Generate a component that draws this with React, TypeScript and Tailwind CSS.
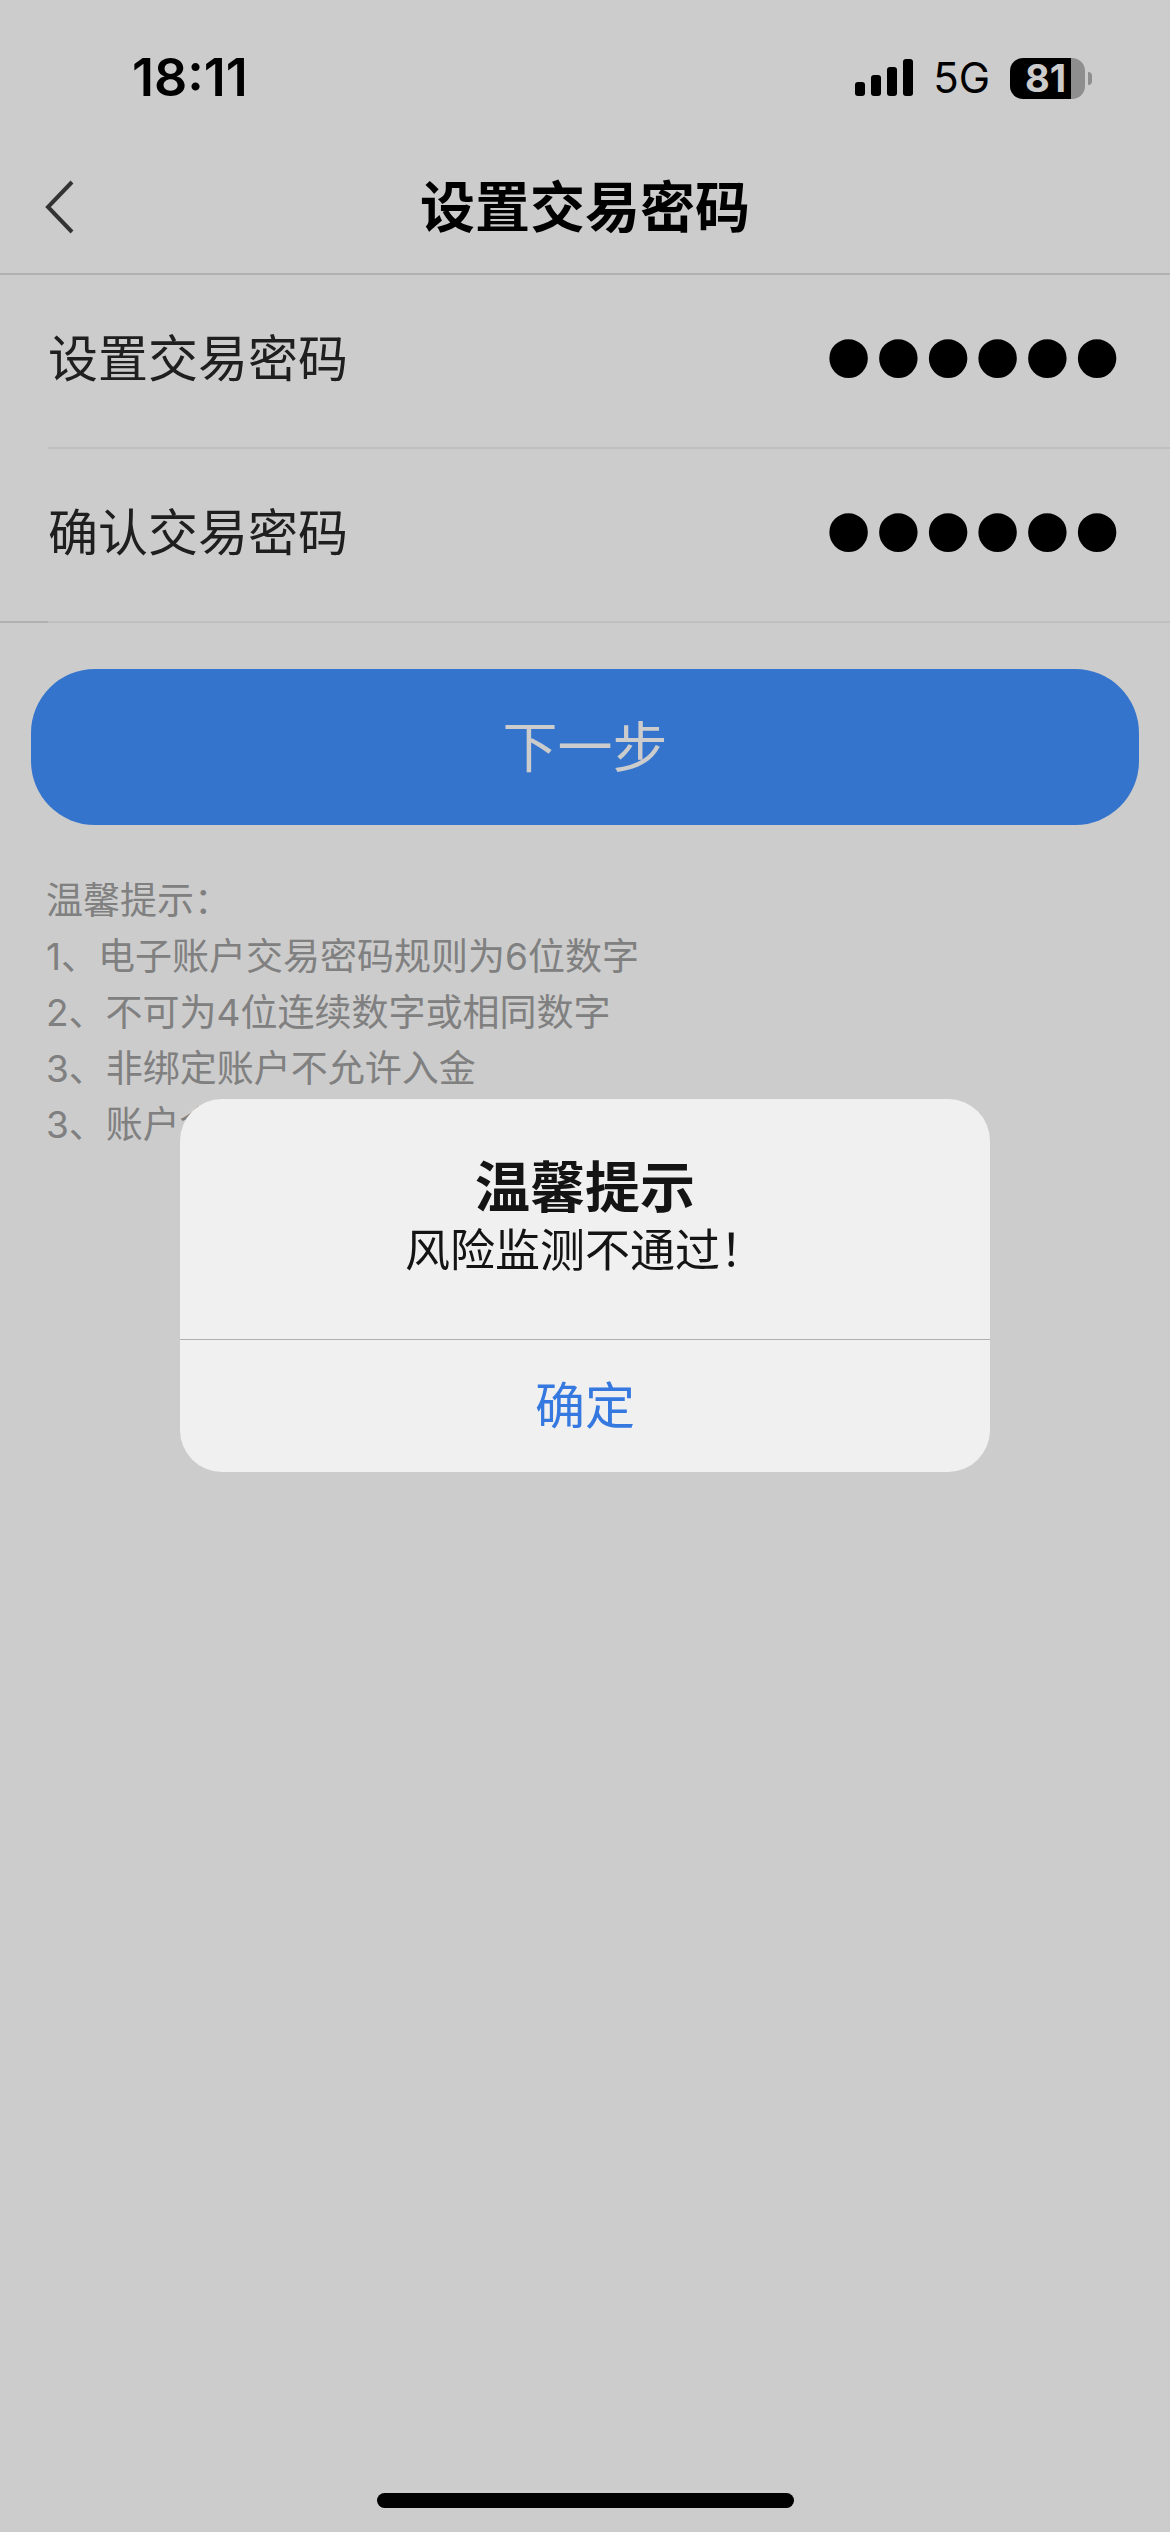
import { useState } from 'react'

interface PasswordRowProps {
  id: string
  label: string
  value: string
  onChange: (value: string) => void
}

const tips = [
  '温馨提示：',
  '1、电子账户交易密码规则为6位数字',
  '2、不可为4位连续数字或相同数字',
  '3、非绑定账户不允许入金',
  '3、账户余额',
]

function StatusBar() {
  return (
    <div className="flex h-[156px] items-center justify-between pr-[78px] pl-[132px]">
      <span className="text-[52px] leading-[60px] font-semibold">18:11</span>
      <div className="flex items-center">
        {/* 信号 */}
        <svg width="58" height="38" viewBox="0 0 58 38" aria-hidden="true">
          <rect x="0" y="23" width="10" height="14" rx="3" />
          <rect x="16" y="16" width="10" height="21" rx="3" />
          <rect x="32" y="8" width="10" height="29" rx="3" />
          <rect x="48" y="0" width="10" height="37" rx="3" />
        </svg>
        <span className="ml-5 text-[42px] leading-[50px]">5G</span>
        {/* 电量 */}
        <div className="ml-5 flex items-center gap-[3px]">
          <div className="flex h-[41px] w-[75px] items-center justify-center rounded-[13px] bg-linear-to-r from-black from-[81%] to-[#b2b2b2] to-[81%] pr-1">
            <span className="text-[38px] leading-[50px] font-bold text-white">81</span>
          </div>
          <div className="h-[13px] w-[4px] rounded-r-full bg-[#b2b2b2]" />
        </div>
      </div>
    </div>
  )
}

function PasswordRow({ id, label, value, onChange }: PasswordRowProps) {
  return (
    <div className="flex h-[172px] items-center justify-between pr-12 pb-1 pl-12">
      <label htmlFor={id} className="shrink-0 text-[50px] leading-[60px] text-[#272727]">
        {label}
      </label>
      <input
        id={id}
        type="password"
        maxLength={6}
        value={value}
        onChange={(e) => onChange(e.target.value)}
        className="h-[164px] min-w-0 flex-1 bg-transparent pb-1 text-right font-['Liberation_Sans',sans-serif] text-[142px] leading-[160px] text-black outline-none"
      />
    </div>
  )
}

export default function App() {
  const [password, setPassword] = useState('135790')
  const [confirm, setConfirm] = useState('135790')
  const [showAlert, setShowAlert] = useState(true)

  return (
    <div className="flex min-h-screen flex-col bg-white font-[Inter,'Noto_Sans_CJK_SC',sans-serif] text-black">
      <StatusBar />

      {/* 导航栏 */}
      <header className="grid h-[119px] grid-cols-[1fr_auto_1fr] items-center border-b-2 border-[#dedede] pb-4">
        <button type="button" aria-label="返回" className="ml-11 w-8">
          <svg width="32" height="54" viewBox="0 0 32 54" fill="none" stroke="#404040" strokeWidth="4">
            <path d="M28 2 L4 27 L28 52" />
          </svg>
        </button>
        <h1 className="text-[55px] leading-[64px] font-bold">设置交易密码</h1>
      </header>

      <form onSubmit={(e) => e.preventDefault()}>
        <PasswordRow id="password" label="设置交易密码" value={password} onChange={setPassword} />
        <div className="ml-12 h-[2px] bg-[#efefef]" />
        <PasswordRow id="confirm" label="确认交易密码" value={confirm} onChange={setConfirm} />
        <div className="flex h-[2px]">
          <div className="w-12 bg-[#dedede]" />
          <div className="flex-1 bg-[#efefef]" />
        </div>

        <div className="px-[31px] pt-[46px]">
          <button
            type="submit"
            className="h-[156px] w-full rounded-[64px] bg-[#4292ff] text-[55px] leading-[64px] text-white"
          >
            下一步
          </button>
        </div>
      </form>

      <div className="px-[46px] pt-12 text-[37px] leading-[56px] text-[#a0a0a0]">
        {tips.map((tip) => (
          <p key={tip}>{tip}</p>
        ))}
      </div>

      <div className="mx-auto mt-auto mb-6 h-[15px] w-[417px] rounded-full bg-black" />

      {/* 提示弹窗 */}
      {showAlert && (
        <div className="fixed inset-0 flex items-center justify-center bg-black/20 pt-[38px]">
          <div
            role="alertdialog"
            aria-labelledby="alert-title"
            aria-describedby="alert-message"
            className="w-[810px] overflow-hidden rounded-[42px] bg-[#f0f0f0] text-center text-[#141414]"
          >
            <div className="px-12 pt-14 pb-14">
              <h2 id="alert-title" className="text-[55px] leading-[64px] font-bold">
                温馨提示
              </h2>
              <p id="alert-message" className="text-[45px] leading-[64px]">
                风险监测不通过！
              </p>
            </div>
            <button
              type="button"
              onClick={() => setShowAlert(false)}
              className="h-[133px] w-full border-t border-[#b0b0b0] text-[50px] leading-[60px] text-[#3578e0]"
            >
              确定
            </button>
          </div>
        </div>
      )}
    </div>
  )
}
